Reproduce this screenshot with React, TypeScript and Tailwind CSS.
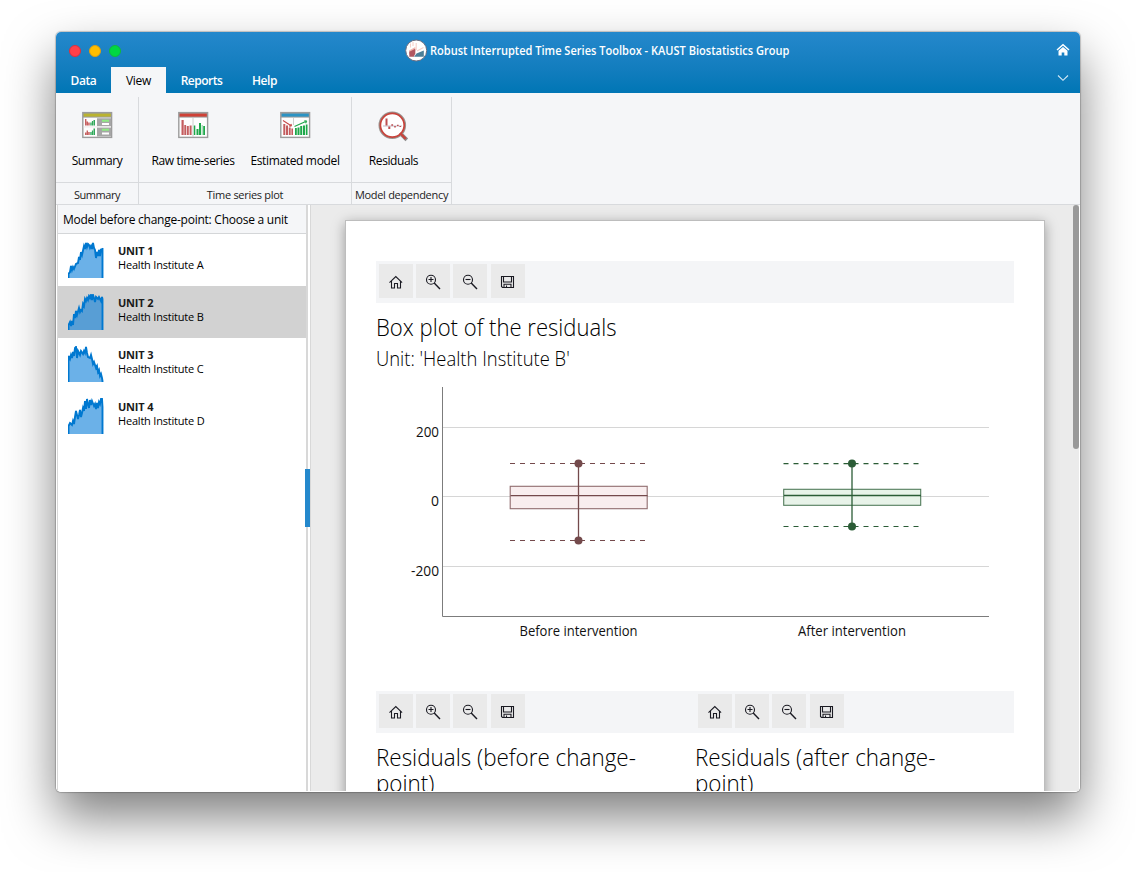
import React from "react";

function Home() {
  return (
    <svg width="34" height="34" viewBox="0 0 34 34" fill="none" stroke="#1a1a22" strokeWidth="1.1">
      <path d="M10.5 18.6 16.800 12.6l6.3 6" />
      <path d="M12.5 17v7h3v-4.5h3V24h3v-7" />
    </svg>
  );
}

function Zoom({ plus }: { plus?: boolean }) {
  return (
    <svg width="34" height="34" viewBox="0 0 34 34" fill="none" stroke="#1a1a22" strokeWidth="1.1">
      <circle cx="15" cy="15.7" r="4.5" />
      <path d="M18.2 19 24 24.9" strokeWidth="1.4" />
      <path d={plus ? "M12.5 15.5h5M15 13v5" : "M12.5 15.5h5"} />
    </svg>
  );
}

function Save() {
  return (
    <svg width="34" height="34" viewBox="0 0 34 34" fill="none" stroke="#1a1a22" strokeWidth="1.1">
      <path d="M10.5 12.5h12v11h-11l-1-1z" />
      <path d="M12.5 12.5v5.5h8v-5.5" />
      <path d="M13 23.5v-3.2h7v3.2M15.5 21.5v2" />
    </svg>
  );
}

function Toolbar() {
  return (
    <div className="flex h-[42px] bg-[#f4f5f7] pt-[3px] pl-[3px]">
      <div className="mr-[3px] size-[34px] bg-[#eaeaea]"><Home /></div>
      <div className="mr-[3px] size-[34px] bg-[#eaeaea]"><Zoom plus /></div>
      <div className="mr-1 size-[34px] bg-[#eaeaea]"><Zoom /></div>
      <div className="size-[34px] bg-[#eaeaea]"><Save /></div>
    </div>
  );
}

function Frame({ bar, children }: { bar: string; children: React.ReactNode }) {
  return (
    <svg width="32" height="32" viewBox="0 0 32 32">
      <rect x="1.8" y="2.6" width="28.8" height="24.8" fill="#fdfdfd" stroke="#9c9c9c" strokeWidth="1.4" />
      <rect x="1.8" y="2.6" width="28.8" height="5" fill="#9c9c9c" />
      <rect x="2.6" y="3.6" width="27.2" height="3" fill={bar} />
      {children}
    </svg>
  );
}

function SummaryIcon() {
  return (
    <Frame bar="#bab32f">
      <g fill="#c65f5f">
        <path d="M4 9h1.400v6.500H4zM5.600 11.500H7v4H5.600zM7.200 12.500h1.500v3H7.200zM4 22.500h1.400V25H4zM5.600 20.500H7V25H5.600zM7.200 22h1.500v3H7.200z" />
      </g>
      <g fill="#2fa85a">
        <path d="M9.300 12.500h1.300v3H9.300zM10.900 11h1.200v4.500h-1.200zM12.500 10h1.500v5.500h-1.500zM9.300 22h1.300v3H9.300zM10.900 20.500h1.200V25h-1.200zM12.500 18.500H14V25h-1.500z" />
      </g>
      <path d="M16 8.200h14v8H16zM16 17.500h14v9H16z" fill="#a6a6a6" />
      <path d="M2.500 16.900h27.500" stroke="#e6e6e6" strokeWidth="0.900" />
      <path d="M21 9.700h7v2h-7zM21 18.800h7v2h-7z" fill="#8fea84" />
      <path d="M21 13h7v2h-7zM21 22.500h7v2h-7z" fill="#fff" />
    </Frame>
  );
}

function RawIcon() {
  return (
    <Frame bar="#cf4136">
      <path d="M16 8v19" stroke="#c4c4c4" strokeWidth="0.800" />
      <path d="M4.500 10h2.200v15H4.500zM7.300 15h1.800v10H7.300zM9.800 16h2v9h-2zM12.600 15.500h2V25h-2z" fill="#c45d5f" />
      <path d="M16.800 15.500h1.500V25h-1.500zM19.500 19h2v6h-2zM22 13h2v12h-2zM26.200 16H28v9h-1.800z" fill="#1ea84a" />
      <path d="M24.600 15h1.200v10h-1.200z" fill="#9fd5ae" />
    </Frame>
  );
}

function ModelIcon() {
  return (
    <Frame bar="#2b93c4">
      <path d="M14.500 8v7" stroke="#c4c4c4" strokeWidth="0.800" />
      <path d="M4.300 14h2v11h-2zM7 15.500h2V25H7zM9.800 17.500h1.900V25H9.800zM12.400 18.500H14V25h-1.600z" fill="#c45d5f" />
      <path d="M16 18h1.800v7H16zM18.500 17.500h2V25h-2zM21.200 16h2v9h-2zM24 15.500h2V25h-2zM26.800 14.500h1.700V25h-1.700z" fill="#1ea84a" />
      <path d="M4 10.500 12.500 16m0 0-.5-2m.5 2-2.200.1" fill="none" stroke="#c94c4c" strokeWidth="1.100" />
      <path d="M15.500 16.500 27.800 11m0 0-2.500-.3m2.500.3-1.200 2.200" fill="none" stroke="#1ea84a" strokeWidth="1.100" />
    </Frame>
  );
}

function ResidualsIcon() {
  return (
    <svg width="32" height="32" viewBox="0 0 32 32">
      <path d="m22.500 23.500 6.300 6.300" stroke="#8c8c8c" strokeWidth="3.800" />
      <circle cx="14.300" cy="15.300" r="12.400" fill="#fff" stroke="#9a938f" strokeWidth="2.800" />
      <circle cx="14.300" cy="15.300" r="11.900" fill="#fff" stroke="#c8443c" strokeWidth="1.700" />
      <path d="m22 23 5.800 5.800" stroke="#c8443c" strokeWidth="2.400" />
      <path d="M5 16h19" stroke="#b3aab8" strokeWidth="0.800" />
      <path d="M7.500 8.500h2v7h-2zM10.300 16.500h2v2.500h-2zM13.300 14.300h1.800v1.500h-1.800zM16.200 16h1.600v1.400h-1.600zM19 14.800h1.600v1.300H19zM21.500 16h1.500v1.100h-1.500z" fill="#bd4e50" />
    </svg>
  );
}

function Logo() {
  return (
    <svg width="23" height="23" viewBox="0 0 23 23">
      <circle cx="11.200" cy="11.500" r="10.500" fill="#fff" stroke="#6d6f80" strokeWidth="1" />
      <path d="M4 11.500 10.300 8v4.300L4 15.800z" fill="#f0b5ae" />
      <path d="M4.300 12.800 10.300 9.800v4.700L8.800 17.800H4.300z" fill="#b05660" />
      <path d="M9 17.800 11.500 14.500l7.300-3v6.300z" fill="#4d7f98" />
      <path d="M11.200 4v7M12 12l6.500-3.500M5.500 4.500v4M8 3v4" stroke="#f6cfc9" strokeWidth="1.100" fill="none" />
    </svg>
  );
}

const units = [
  {
    name: "UNIT 1",
    place: "Health Institute A",
    line: "0.5,35 0.5,31 2,29 3,23 4,27 5,24 6,26 8,21 10,20 11,14 12,17 13,9 14,12 16,3 17,6 18,0 19,4 20,1 21,2 22,5 23,3 24,6 25,0 26,5 27,7 28,15 29,9 30,13 31,7 32,13 33,6 34,9 34.500,5",
  },
  {
    name: "UNIT 2",
    place: "Health Institute B",
    line: "0.5,35 0.5,30 2,27 3,31 4,26 5,30 6,19 7,23 8,16 9,20 11,13 12,17 13,15 14,16 15,9 16,11 17,4 18,6 19,3 20,5 21,1 22,3 23,0 24,5 25,0 26,3 27,7 28,2 30,4 31,2 33,6 34,2 34.500,4",
  },
  {
    name: "UNIT 3",
    place: "Health Institute C",
    line: "0.5,35 0.5,9 2,12 3,8 4,11 5,5 6,9 7,1 8,0 9,11 10,4 12,8 13,4 15,7 16,4 17,6 18,0 19,6 20,10 22,11 23,8 24,12 25,17 26,15 28,21 29,19 30,25 31,23 32,29 33,27 34,31 34.500,34",
  },
  {
    name: "UNIT 4",
    place: "Health Institute D",
    line: "0.5,35 0.5,27 2,24 4,26 5,22 6,25 7,18 8,12 9,16 10,20 11,16 12,11 13,18 14,14 15,9 16,12 17,2 18,10 19,0 20,5 21,9 22,1 23,6 24,2 26,7 27,5 28,10 29,4 30,9 31,3 32,5 33,0 34,0 34.500,8",
  },
];

function Box({ x, color, fill, top, q3, mid, q1, bottom }: {
  x: number; color: string; fill: string; top: number; q3: number; mid: number; q1: number; bottom: number;
}) {
  return (
    <g stroke={color} strokeWidth="1.100">
      <path d={`M${x - 68.5} ${top}h137M${x - 68.5} ${bottom}h137`} strokeDasharray="5 5" />
      <rect x={x - 68.3} y={q3} width="137" height={q1 - q3} fill={fill} strokeOpacity="0.800" />
      <path d={`M${x - 68} ${mid}h137`} strokeWidth="1.300" />
      <path d={`M${x} ${top}V${bottom}`} strokeWidth="1.300" />
      <circle cx={x} cy={top} r="4" fill={color} stroke="none" />
      <circle cx={x} cy={bottom} r="4" fill={color} stroke="none" />
    </g>
  );
}

function BoxPlot() {
  return (
    <svg className="block" width="638" height="270" viewBox="376 380 638 270" fill="none">
      <path d="M443 427.500h546M443 496.500h546M443 566.500h546" stroke="#d6d6d6" />
      <path d="M442.500 387v229.500H989" stroke="#7c7c7c" />
      <Box x={578.5} color="#744a4c" fill="#f9eeef" top={463.5} q3={486.3} mid={495.7} q1={508.7} bottom={540.5} />
      <Box x={852} color="#2b5c36" fill="#e8f3e9" top={463.6} q3={489.3} mid={495.5} q1={505.3} bottom={526.5} />
      <g fill="#111" fontSize="14" className="font-['Open_Sans',sans-serif]">
        <text x="416" y="437" textLength="23" lengthAdjust="spacingAndGlyphs">200</text>
        <text x="431" y="506" textLength="8" lengthAdjust="spacingAndGlyphs">0</text>
        <text x="411" y="576" textLength="28" lengthAdjust="spacingAndGlyphs">-200</text>
        <text x="519.500" y="636" textLength="118" lengthAdjust="spacingAndGlyphs">Before intervention</text>
        <text x="798" y="636" textLength="108" lengthAdjust="spacingAndGlyphs">After intervention</text>
      </g>
    </svg>
  );
}

export default function App() {
  return (
    <div className="h-[872px] w-[1136px] overflow-hidden bg-white px-14 pt-8 font-['Open_Sans',sans-serif] text-black">
      <div className="h-[760px] w-[1024px] rounded-[5px] shadow-[0_25px_50px_rgba(0,0,0,0.5),0_0_1px_1px_rgba(0,0,0,0.2)]">
        <div className="flex h-full flex-col overflow-hidden rounded-[5px] bg-white">
          <header className="flex h-[61px] shrink-0 flex-col bg-linear-to-b from-[#2488cc] to-[#0076b5]">
            <div className="flex h-[35px] items-center">
              <div className="mt-[3px] ml-[13px] flex w-[336px] gap-2">
                <span className="size-3 rounded-full border border-[#dd2f3e] bg-[#ff4048]" />
                <span className="size-3 rounded-full border border-[#dc9f12] bg-[#ffbe00]" />
                <span className="size-3 rounded-full border border-[#10b83c] bg-[#00d742]" />
              </div>
              <div className="mt-[2px]"><Logo /></div>
              <h1 className="mt-[3px] ml-[2px] w-[361px] origin-left scale-x-[0.920] text-[12px] leading-4 font-semibold whitespace-nowrap text-white">
                Robust Interrupted Time Series Toolbox - KAUST Biostatistics Group
              </h1>
              <svg className="mt-0 ml-auto mr-[10px]" width="14" height="14" viewBox="0 0 14 14">
                <path d="M1 7 7 1.800 13 7" fill="none" stroke="#fff" strokeWidth="1.500" />
                <path d="M2.500 7.700 7 4.100l4.500 3.600V12.500H8.300V9.500H5.700v3H2.500z" fill="#fff" />
              </svg>
            </div>
            <nav className="flex h-[26px] items-center text-[12px] leading-[28px] font-semibold text-white">
              <span className="h-[26px] w-[55px] text-center tracking-[-0.400px]">Data</span>
              <span className="h-[26px] w-[55px] bg-[#f5f6f8] text-center font-normal tracking-[-0.300px] text-black">View</span>
              <span className="h-[26px] w-[71px] text-center tracking-[-0.500px]">Reports</span>
              <span className="h-[26px] w-[55px] text-center tracking-[-0.400px]">Help</span>
              <svg className="mr-[11px] mb-1 ml-auto" width="12" height="8" viewBox="0 0 12 8">
                <path d="M1 1.500 6 6.300l5-4.800" fill="none" stroke="#d3e8f5" strokeWidth="1.100" />
              </svg>
            </nav>
          </header>

          <section className="flex h-[112px] shrink-0 border-b border-[#d8dadd] bg-[#f5f6f8] pt-1">
            <div className="flex w-[83px] flex-col border-r border-[#d8dadd]">
              <div className="flex h-[86px] flex-col items-center border-b border-[#d8dadd] pt-[13px]">
                <SummaryIcon />
                <span className="mt-[11px] text-[12px] leading-4 tracking-[-0.450px]">Summary</span>
              </div>
              <span className="pt-1 text-center text-[11px] leading-4 tracking-[-0.450px] text-[#222]">Summary</span>
            </div>
            <div className="flex w-[213px] flex-col border-r border-[#d8dadd]">
              <div className="flex h-[86px] border-b border-[#d8dadd] pt-[13px]">
                <div className="flex w-[108px] flex-col items-center">
                  <RawIcon />
                  <span className="mt-[11px] text-[12px] leading-4 tracking-[-0.350px] whitespace-nowrap">Raw time-series</span>
                </div>
                <div className="flex w-[96px] flex-col items-center">
                  <ModelIcon />
                  <span className="mt-[11px] text-[12px] leading-4 tracking-[-0.350px] whitespace-nowrap">Estimated model</span>
                </div>
              </div>
              <span className="pt-1 text-center text-[11px] leading-4 tracking-[-0.300px] text-[#222]">Time series plot</span>
            </div>
            <div className="flex w-[100px] flex-col border-r border-[#d8dadd]">
              <div className="flex h-[86px] border-b border-[#d8dadd] pt-[13px]">
                <div className="flex w-[83px] flex-col items-center">
                  <ResidualsIcon />
                  <span className="mt-[11px] text-[12px] leading-4 tracking-[-0.400px]">Residuals</span>
                </div>
              </div>
              <span className="pt-1 text-center text-[11px] leading-4 tracking-[-0.300px] whitespace-nowrap text-[#222]">Model dependency</span>
            </div>
          </section>

          <div className="flex h-[586px] shrink-0">
            <aside className="ml-px w-[249px] border-l border-[#d8d8d8]">
              <div className="h-[29px] border-b border-[#d4d6d8] bg-[#f5f6f8] pl-[5px] text-[12px] leading-[30px] tracking-[-0.250px] whitespace-nowrap">
                Model before change-point: Choose a unit
              </div>
              {units.map((u, i) => (
                <div key={u.name} className={i === 1 ? "flex h-[52px] bg-[#d2d2d2] pt-2 pl-[10px]" : "flex h-[52px] pt-2 pl-[10px]"}>
                  <svg width="36" height="36" viewBox="0 0 36 36">
                    <polygon points={`${u.line} 34.5,36 0,36`} fill="#0078d7" fillOpacity="0.580" />
                    <polyline points={`${u.line} 34.5,36`} transform="translate(0 1)" fill="none" stroke="#0078d0" strokeWidth="1.900" />
                  </svg>
                  <div className="ml-[14px] pt-[2px] text-[11px] leading-[14px] whitespace-nowrap">
                    <div className="font-bold tracking-[-0.200px] text-[#1a1a1a]">{u.name}</div>
                    <div className="tracking-[-0.200px]">{u.place}</div>
                  </div>
                </div>
              ))}
            </aside>
            <div className="relative w-[5px] border-r border-l-2 border-[#d8d8d8] bg-white">
              <div className="absolute top-[264px] -left-[3px] h-[58px] w-[5px] bg-[#2488cc]" />
            </div>
            <main className="flex w-[768px] overflow-hidden bg-[#ebebeb]">
              <div className="mt-[15px] ml-[34px] h-[720px] w-[700px] shrink-0 border border-[#bdbdbd] bg-white px-[30px] pt-10 shadow-[0_3px_12px_rgba(0,0,0,0.350)]">
                <Toolbar />
                <h2 className="mt-[8px] origin-left scale-x-[0.920] text-[24px] leading-8 font-light whitespace-nowrap text-black">Box plot of the residuals</h2>
                <h3 className="mt-[3px] h-[34px] origin-left scale-x-[0.920] text-[20px] leading-[26px] font-light whitespace-nowrap text-black">Unit: 'Health Institute B'</h3>
                <BoxPlot />
                <div className="mt-[41px] grid grid-cols-2">
                  <div>
                    <Toolbar />
                    <h2 className="mt-[11px] origin-left scale-x-[0.935] text-[24px] leading-[26px] font-light whitespace-nowrap text-black">Residuals (before change-<br />point)</h2>
                  </div>
                  <div>
                    <Toolbar />
                    <h2 className="mt-[11px] origin-left scale-x-[0.935] text-[24px] leading-[26px] font-light whitespace-nowrap text-black">Residuals (after change-<br />point)</h2>
                  </div>
                </div>
              </div>
              <div className="ml-auto h-[244px] w-1.5 shrink-0 rounded-[3px] bg-[#999]" />
            </main>
          </div>
        </div>
      </div>
    </div>
  );
}
